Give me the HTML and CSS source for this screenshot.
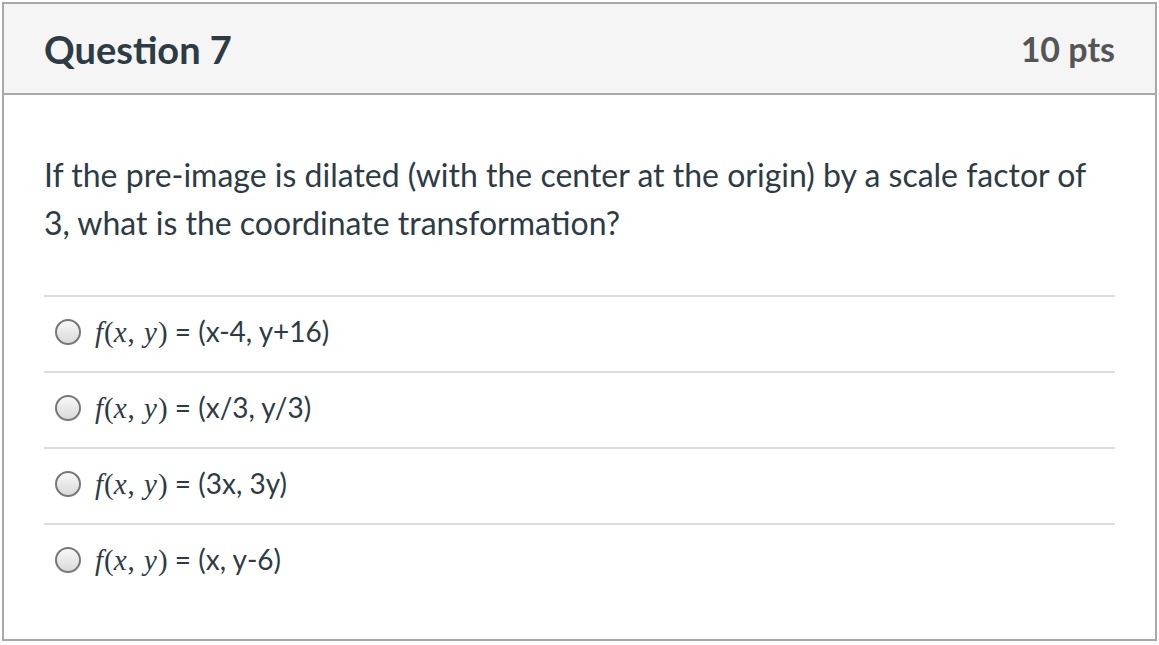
FILE: index.html
```html
<!DOCTYPE html>
<html>
<head>
<meta charset="utf-8">
<link rel="stylesheet" href="styles.css">
</head>
<body>
<div class="quiz">
  <div class="header">
    <h2 class="title">Question 7</h2>
    <div class="pts">10 pts</div>
  </div>
  <div class="content">
    <p class="question">If the pre-image is dilated (with the center at the origin) by a scale factor of 3, what is the coordinate transformation?</p>
    <div class="answers">
      <div class="answer"><span class="radio"></span><span class="label"><span class="math"><i>f</i>(<i>x</i>, <i>y</i>)</span> = (x-4, y+16)</span></div>
      <div class="answer"><span class="radio"></span><span class="label"><span class="math"><i>f</i>(<i>x</i>, <i>y</i>)</span> = (x/3, y/3)</span></div>
      <div class="answer"><span class="radio"></span><span class="label"><span class="math"><i>f</i>(<i>x</i>, <i>y</i>)</span> = (3x, 3y)</span></div>
      <div class="answer"><span class="radio"></span><span class="label"><span class="math"><i>f</i>(<i>x</i>, <i>y</i>)</span> = (x, y-6)</span></div>
    </div>
  </div>
</div>
</body>
</html>
```
FILE: styles.css
```css
html, body {
  margin: 0;
  padding: 0;
  background: #fff;
}
body {
  font-family: Lato, "Liberation Sans", sans-serif;
  color: #2d3b45;
}
.quiz {
  margin: 2px 2px 0 2px;
  border: 2px solid #a9a9a9;
  height: 639px;
  box-sizing: border-box;
}
.header {
  background: #f5f5f5;
  border-bottom: 2px solid #a9a9a9;
  height: 91px;
  box-sizing: border-box;
  display: flex;
  align-items: center;
  justify-content: space-between;
  padding: 0 40px;
}
.title {
  margin: 0;
  font-size: 38px;
  font-weight: 700;
  color: #2d3b45;
}
.pts {
  font-size: 34px;
  font-weight: 700;
  color: #555;
}
.content {
  padding: 56px 40px 0 40px;
}
.question {
  margin: 0 0 48px 0;
  font-size: 32px;
  line-height: 48px;
}
.answers {
  border-top: 2px solid #ddd;
}
.answer {
  display: flex;
  align-items: center;
  height: 74px;
  box-sizing: content-box;
  padding: 0 0 0 11px;
  border-bottom: 2px solid #ddd;
}
.answer:last-child {
  border-bottom: none;
}
.radio {
  width: 26px;
  height: 26px;
  border-radius: 50%;
  border: 2px solid #777;
  box-sizing: border-box;
  background: linear-gradient(#f8f8f8, #d9d9d9);
  margin: 0 14px 4px 0;
  flex: none;
}
.label {
  font-size: 28px;
  padding-bottom: 6px;
}
.math {
  font-family: "Liberation Serif", serif;
  font-size: 29px;
  word-spacing: 2px;
}
.math i {
  padding-right: 1px;
}
```
